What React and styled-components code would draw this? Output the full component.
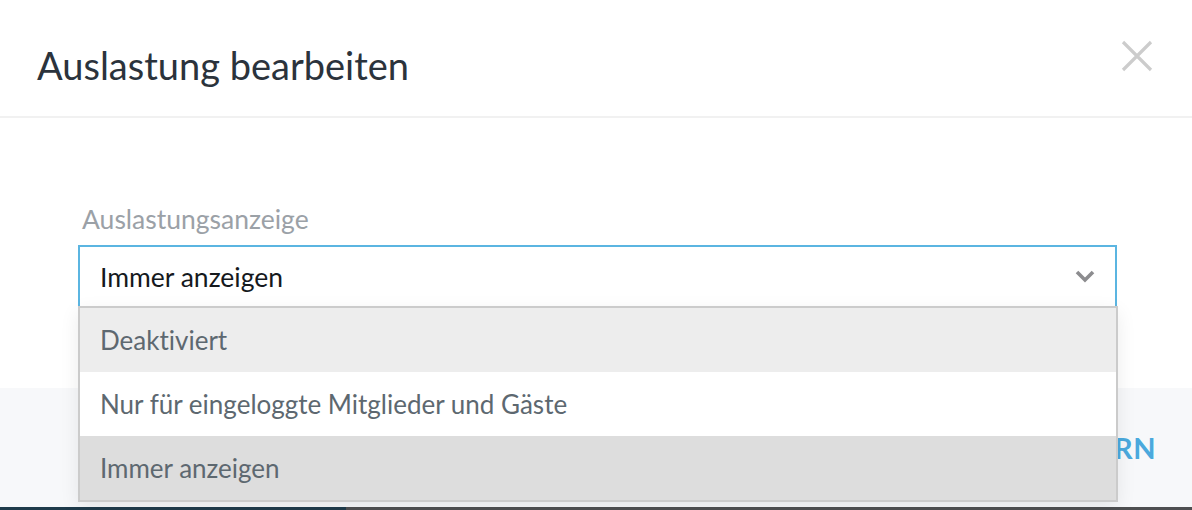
import React from 'react';
import styled, { createGlobalStyle } from 'styled-components';

const GlobalStyle = createGlobalStyle`
  html, body {
    margin: 0;
    padding: 0;
    background: #ffffff;
  }
  body {
    font-family: Lato, "Open Sans", sans-serif;
    font-variant-ligatures: none;
  }
`;

const Modal = styled.div`
  width: 1192px;
  height: 510px;
  display: flex;
  flex-direction: column;
  overflow: hidden;
  background: #ffffff;
`;

const Header = styled.div`
  height: 116px;
  flex-shrink: 0;
  display: flex;
  align-items: center;
  justify-content: space-between;
  padding: 0 38px 0 37px;
  border-bottom: 2px solid #f1f1f1;
`;

const Title = styled.h2`
  margin: 14px 0 0 0;
  font-size: 38px;
  font-weight: 400;
  color: #2b333c;
`;

const CloseButton = styled.button`
  border: 0;
  background: none;
  padding: 0;
  width: 34px;
  height: 34px;
  display: flex;
  align-items: center;
  justify-content: center;
  cursor: pointer;
  margin-bottom: 4px;
`;

const Body = styled.div`
  height: 270px;
  flex-shrink: 0;
  padding: 85px 75px 0 78px;
  box-sizing: border-box;
  background: #ffffff;
`;

const Label = styled.div`
  font-size: 26.5px;
  color: #9ba1a7;
  margin: 0 0 10px 4px;
  line-height: 32px;
`;

const SelectWrap = styled.div`
  position: relative;
  width: 1039px;
`;

const SelectBox = styled.div`
  height: 63px;
  box-sizing: border-box;
  border: 2px solid #5bb5e1;
  display: flex;
  align-items: center;
  justify-content: space-between;
  padding: 0 20px 0 20px;
  font-size: 26.5px;
  color: #15191d;
  background: #fff;
`;

const Menu = styled.ul`
  position: absolute;
  top: 61px;
  left: 0;
  right: -1px;
  margin: 0;
  padding: 0;
  list-style: none;
  border: 2px solid #cbcbcb;
  background: #fff;
  box-shadow: 0 6px 18px rgba(0, 0, 0, 0.08);
  z-index: 2;
`;

const Option = styled.li`
  height: 64px;
  display: flex;
  align-items: center;
  padding-left: 20px;
  font-size: 26px;
  color: #5d6870;
  background: ${(p) => (p.$selected ? '#dddddd' : p.$hover ? '#ededed' : '#ffffff')};
`;

const Footer = styled.div`
  flex: 1;
  background: #f7f8fa;
  display: flex;
  align-items: center;
  justify-content: flex-end;
  padding: 0 36px 0 0;
`;

const SaveButton = styled.button`
  border: 0;
  background: none;
  padding: 0;
  font-family: Lato, sans-serif;
  font-size: 29px;
  font-weight: 700;
  letter-spacing: 0.5px;
  color: #4ba9dd;
`;

const Strip = styled.div`
  height: 3px;
  flex-shrink: 0;
  display: flex;
`;

const StripPart = styled.div`
  height: 100%;
  width: ${(p) => p.$w || 'auto'};
  flex: ${(p) => (p.$w ? '0 0 auto' : '1')};
  background: ${(p) => p.$c};
`;

const options = [
  { label: 'Deaktiviert', hover: true },
  { label: 'Nur für eingeloggte Mitglieder und Gäste' },
  { label: 'Immer anzeigen', selected: true },
];

export default function App() {
  return (
    <>
      <GlobalStyle />
      <Modal>
        <Header>
          <Title>Auslastung bearbeiten</Title>
          <CloseButton aria-label="Schließen">
            <svg width="32" height="32" viewBox="0 0 32 32">
              <path d="M2 2 L30 30 M30 2 L2 30" stroke="#cccccc" strokeWidth="3.2" />
            </svg>
          </CloseButton>
        </Header>
        <Body>
          <Label>Auslastungsanzeige</Label>
          <SelectWrap>
            <SelectBox>
              <span>Immer anzeigen</span>
              <svg width="20" height="13" viewBox="0 0 20 13">
                <path d="M2 2 L10 10 L18 2" stroke="#8c8c8f" strokeWidth="3.6" fill="none" />
              </svg>
            </SelectBox>
            <Menu>
              {options.map((o) => (
                <Option key={o.label} $selected={o.selected} $hover={o.hover}>
                  {o.label}
                </Option>
              ))}
            </Menu>
          </SelectWrap>
        </Body>
        <Footer>
          <SaveButton>SPEICHERN</SaveButton>
        </Footer>
        <Strip>
          <StripPart $w="346px" $c="#1f3b4b" />
          <StripPart $c="#4e4f51" />
        </Strip>
      </Modal>
    </>
  );
}
